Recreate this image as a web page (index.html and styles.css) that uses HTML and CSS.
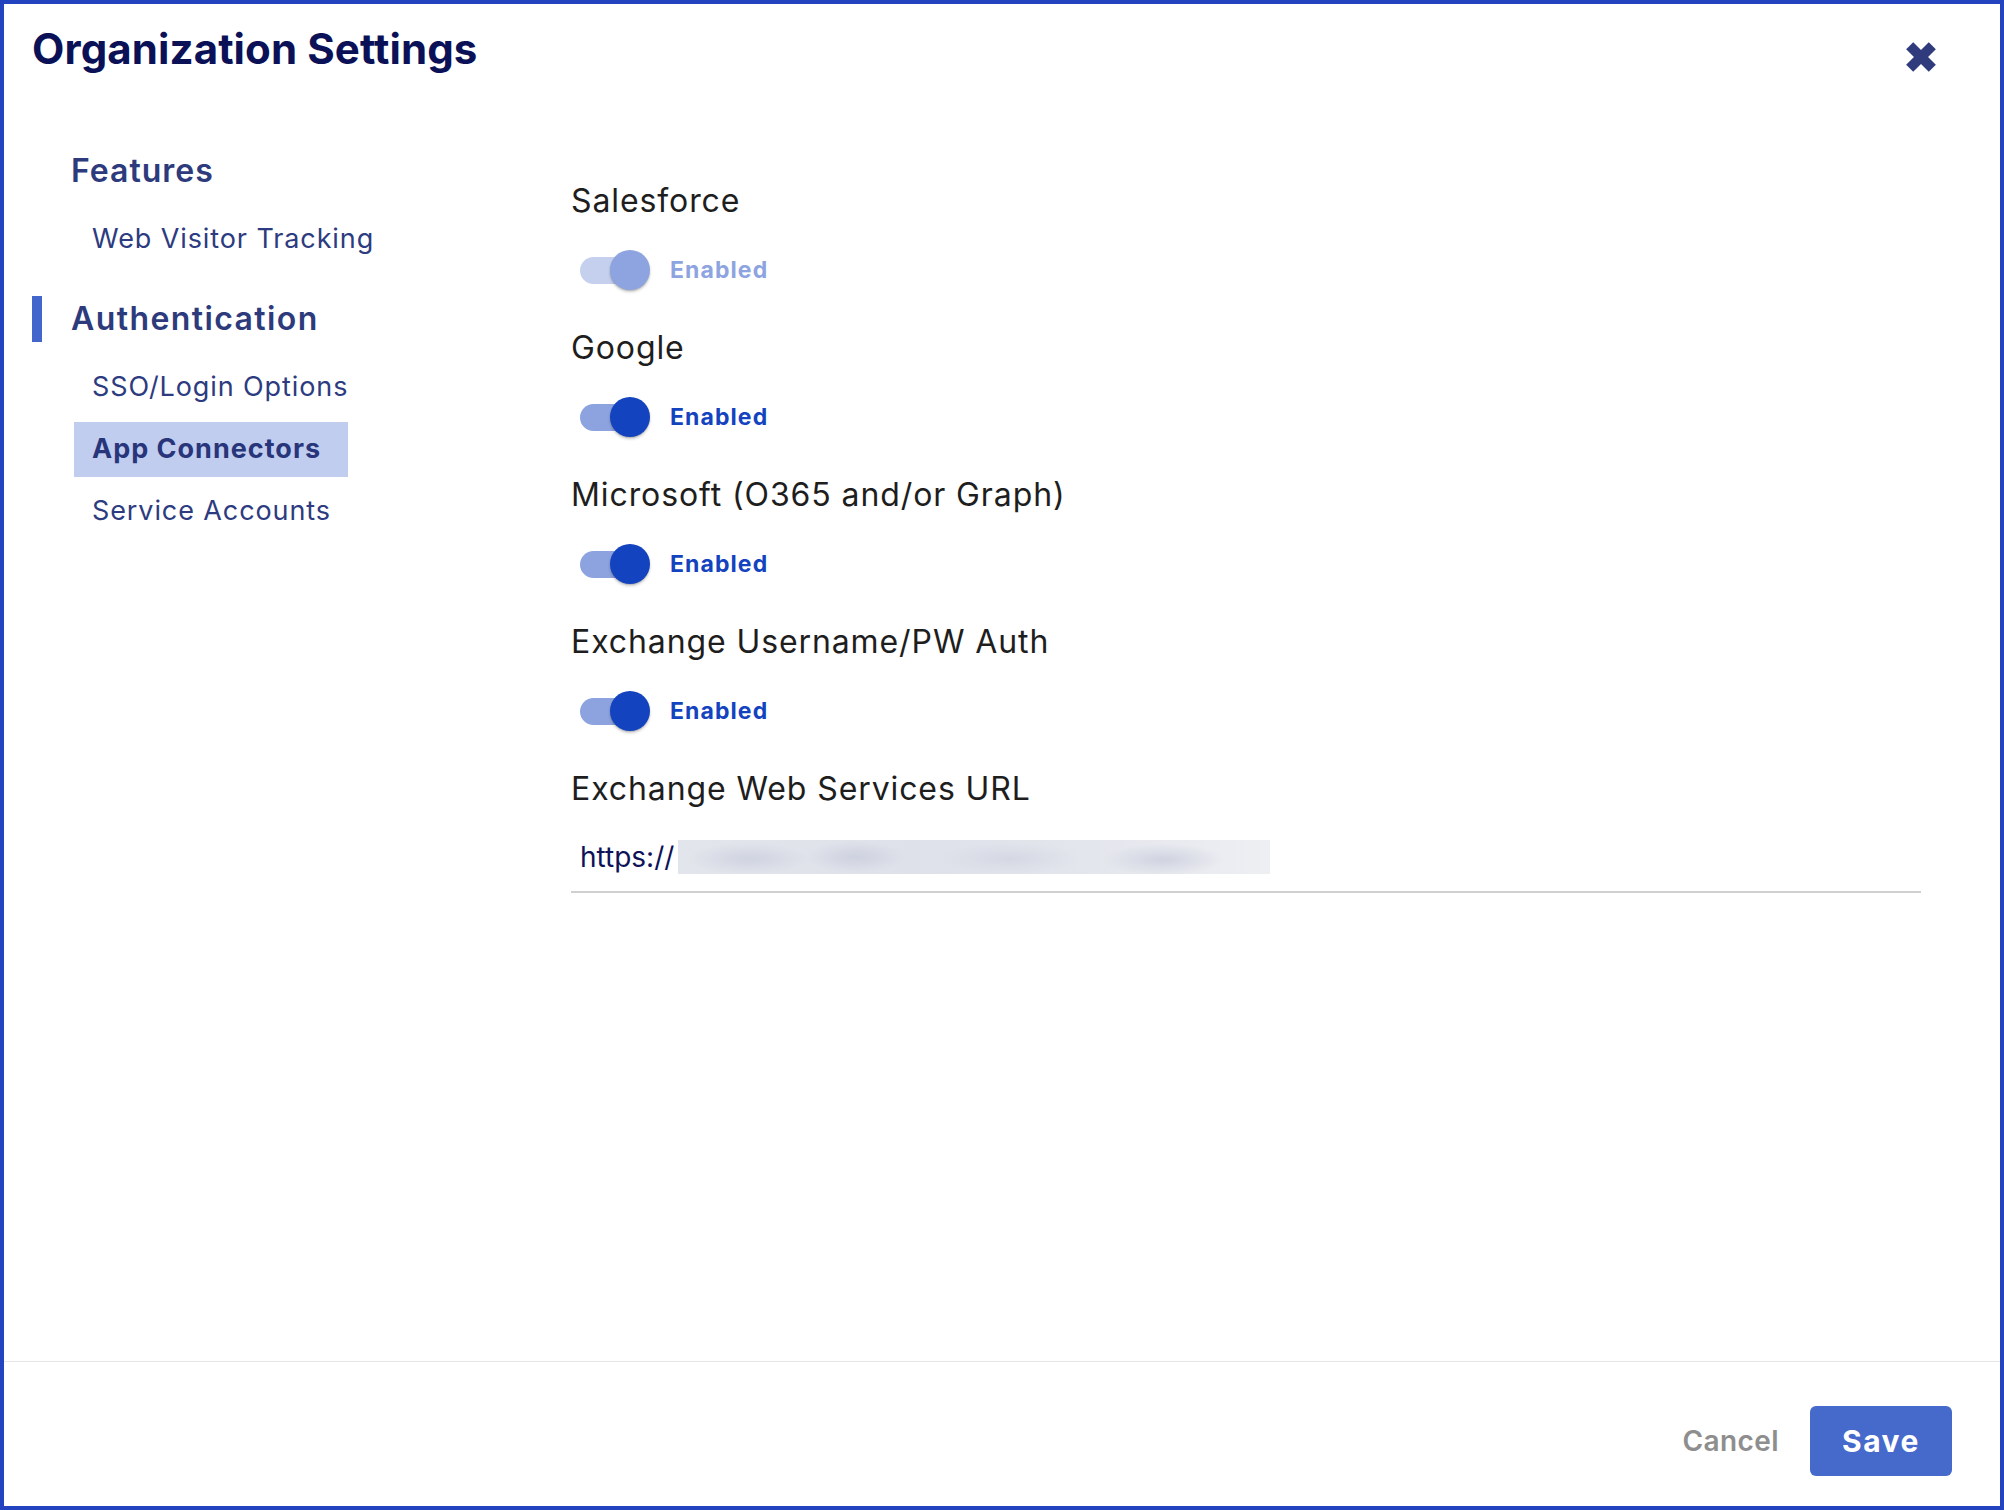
FILE: index.html
```html
<!DOCTYPE html>
<html lang="en">
<head>
  <meta charset="UTF-8" />
  <meta name="viewport" content="width=device-width, initial-scale=1.0"/>
  <title>Organization Settings</title>
  <link rel="stylesheet" href="styles.css">
</head>
<body>

<div class="dialog">
  <div class="dialog-header">
    <h1 class="dialog-title">Organization Settings</h1>
    <button class="close-btn" aria-label="Close">
      <svg width="30" height="30" viewBox="0 0 30 30">
        <g transform="translate(15 15)">
          <rect x="-16" y="-5" width="32" height="10" transform="rotate(45)"/>
          <rect x="-16" y="-5" width="32" height="10" transform="rotate(-45)"/>
        </g>
      </svg>
    </button>
  </div>

  <div class="dialog-body">
    <!-- Left nav -->
    <nav class="side-nav">
      <div class="nav-group">
        <div class="nav-group-title">Features</div>
        <a class="nav-item">Web Visitor Tracking</a>
      </div>
      <div class="nav-group">
        <div class="nav-group-title active">Authentication</div>
        <a class="nav-item">SSO/Login Options</a>
        <a class="nav-item selected">App Connectors</a>
        <a class="nav-item">Service Accounts</a>
      </div>
    </nav>

    <!-- Settings -->
    <div class="settings">
      <div class="field">
        <div class="field-label">Salesforce</div>
        <label class="switch disabled">
          <span class="switch-track"><span class="switch-thumb"></span></span>
          <span class="switch-text">Enabled</span>
        </label>
      </div>

      <div class="field">
        <div class="field-label">Google</div>
        <label class="switch">
          <span class="switch-track"><span class="switch-thumb"></span></span>
          <span class="switch-text">Enabled</span>
        </label>
      </div>

      <div class="field">
        <div class="field-label">Microsoft (O365 and/or Graph)</div>
        <label class="switch">
          <span class="switch-track"><span class="switch-thumb"></span></span>
          <span class="switch-text">Enabled</span>
        </label>
      </div>

      <div class="field">
        <div class="field-label">Exchange Username/PW Auth</div>
        <label class="switch">
          <span class="switch-track"><span class="switch-thumb"></span></span>
          <span class="switch-text">Enabled</span>
        </label>
      </div>

      <div class="field">
        <div class="field-label">Exchange Web Services URL</div>
        <div class="text-input">
          <span class="url-prefix">https://</span><span class="redacted"></span>
        </div>
      </div>
    </div>
  </div>

  <div class="dialog-footer">
    <button class="btn-cancel">Cancel</button>
    <button class="btn-save">Save</button>
  </div>
</div>

</body>
</html>
```

FILE: styles.css
```css
body {
  margin: 0;
  font-family: "Inter", "Noto Sans", sans-serif;
  background: white;
}

.dialog {
  width: 2004px;
  height: 1510px;
  box-sizing: border-box;
  border: 4px solid #2443bf;
  display: flex;
  flex-direction: column;
  background: white;
}

/* Header */
.dialog-header {
  height: 96px;
  box-sizing: border-box;
  padding: 19px 64px 0 28px;
  display: flex;
  justify-content: space-between;
  align-items: flex-start;
}

.dialog-title {
  margin: 0;
  font-size: 42px;
  line-height: 52px;
  font-weight: 700;
  color: #0b1157;
  letter-spacing: 0.1px;
}

.close-btn {
  margin-top: 19px;
  padding: 0;
  border: none;
  background: none;
  width: 30px;
  height: 30px;
  cursor: pointer;
}

.close-btn svg {
  display: block;
  fill: #2f3b7d;
}

/* Body */
.dialog-body {
  flex: 1;
  display: flex;
}

.side-nav {
  width: 567px;
  box-sizing: border-box;
  padding: 48px 0 0 28px;
}

.nav-group + .nav-group {
  margin-top: 29px;
}

.nav-group-title {
  height: 46px;
  line-height: 46px;
  font-size: 32px;
  font-weight: 600;
  color: #2d3b7d;
  border-left: 10px solid transparent;
  padding-left: 29px;
  letter-spacing: 1px;
}

.nav-group-title.active {
  border-left-color: #4366cc;
  letter-spacing: 1.4px;
}

.nav-item {
  display: block;
  width: fit-content;
  box-sizing: border-box;
  height: 55px;
  line-height: 54px;
  margin: 7px 0 0 42px;
  padding: 0 27px 1px 18px;
  font-size: 27px;
  letter-spacing: 0.9px;
  color: #2d3b80;
  white-space: nowrap;
  cursor: pointer;
}

.nav-group-title + .nav-item {
  margin-top: 18px;
}

.nav-item.selected {
  background: #c1cdee;
  font-weight: 700;
  color: #28357a;
  letter-spacing: 1px;
}

/* Settings column */
.settings {
  flex: 1;
  padding: 81px 79px 0 0;
}

.field {
  margin-bottom: 38px;
}

.field-label {
  font-size: 32px;
  line-height: 40px;
  color: #1e1e1e;
  letter-spacing: 0.9px;
  margin-bottom: 29px;
}

.switch {
  display: flex;
  align-items: center;
  height: 40px;
  padding-left: 9px;
  cursor: pointer;
}

.switch-track {
  position: relative;
  width: 62px;
  height: 27px;
  border-radius: 14px;
  background: #8da3df;
}

.switch-thumb {
  position: absolute;
  left: 30px;
  top: -7px;
  width: 40px;
  height: 40px;
  border-radius: 50%;
  background: #1343bf;
  box-shadow: 0 2px 3px rgba(0,0,0,0.2), 0 1px 1px rgba(0,0,0,0.12);
}

.switch-text {
  margin-left: 28px;
  font-size: 23px;
  font-weight: 700;
  letter-spacing: 1.1px;
  color: #1343bf;
}

.switch.disabled .switch-track {
  background: #c5d0ef;
}

.switch.disabled .switch-thumb {
  background: #8da4e0;
}

.switch.disabled .switch-text {
  color: #8da4e0;
}

.field-label + .text-input {
  margin-top: -1px;
}

.text-input {
  display: flex;
  align-items: center;
  height: 40px;
  padding: 0 0 14px 9px;
  border-bottom: 2px solid #d0d0d0;
}

.url-prefix {
  font-size: 28px;
  color: #0d1259;
}

.redacted {
  width: 592px;
  height: 34px;
  margin-left: 4px;
  background:
    radial-gradient(ellipse 60px 16px at 12% 55%, rgba(200,204,220,0.7), transparent),
    radial-gradient(ellipse 50px 16px at 30% 50%, rgba(198,202,218,0.7), transparent),
    radial-gradient(ellipse 70px 16px at 56% 55%, rgba(205,208,222,0.6), transparent),
    radial-gradient(ellipse 60px 16px at 82% 58%, rgba(198,202,218,0.7), transparent),
    linear-gradient(90deg, #e3e5ec, #dfe1ea 40%, #e4e6ed 70%, #eeeff3);
}

/* Footer */
.dialog-footer {
  height: 145px;
  box-sizing: border-box;
  border-top: 1px solid #e6e6e6;
  display: flex;
  justify-content: flex-end;
  align-items: flex-start;
  padding: 44px 48px 0 0;
  gap: 31px;
}

.btn-cancel {
  height: 70px;
  border: none;
  background: none;
  padding: 0;
  font-family: inherit;
  font-size: 28px;
  font-weight: 600;
  letter-spacing: 0.4px;
  color: #8e8e8e;
  cursor: pointer;
}

.btn-save {
  width: 142px;
  height: 70px;
  border: none;
  border-radius: 6px;
  background: #4669cc;
  color: white;
  font-family: inherit;
  font-size: 30px;
  font-weight: 700;
  letter-spacing: 1.5px;
  cursor: pointer;
}

.btn-save:hover {
  background: #3a5cbf;
}
```
